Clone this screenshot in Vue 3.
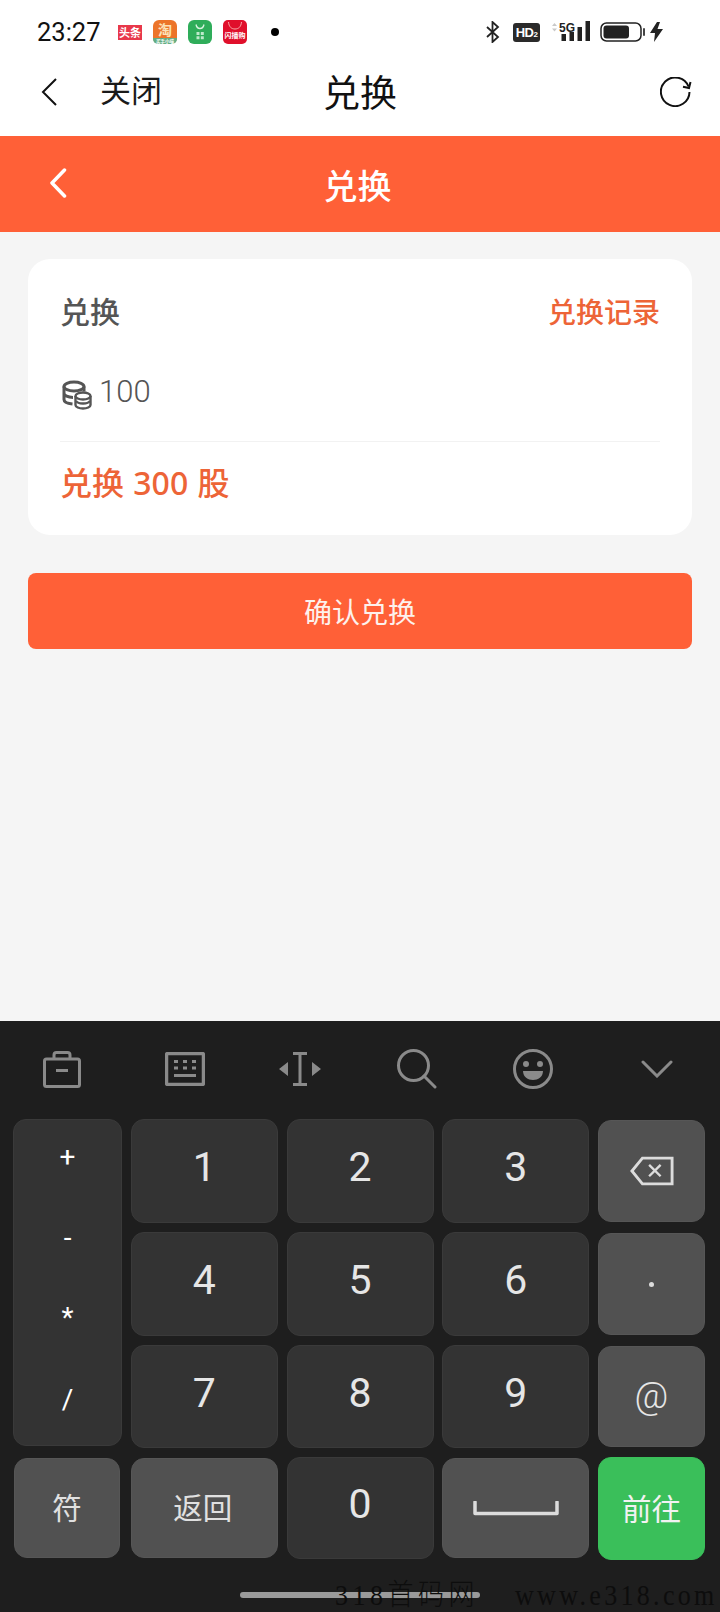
<template>
  <div class="page">
    <!-- status bar -->
    <div class="status">
      <span class="time">23:27</span>
      <div class="apps">
        <svg width="24" height="24" viewBox="0 0 24 24">
          <rect x="0" y="5" width="24" height="15" fill="#e8384a" />
          <text x="12" y="16.5" class="app-text" font-size="11" fill="#fff" text-anchor="middle">头条</text>
        </svg>
        <svg width="24" height="24" viewBox="0 0 24 24">
          <rect width="24" height="24" rx="6" fill="#ec7429" />
          <path d="M0 18h24v1a5 5 0 0 1-5 5H5a5 5 0 0 1-5-5z" fill="#62ad83" />
          <text x="12" y="15" class="app-text" font-size="14" fill="#fbe2b8" text-anchor="middle">淘</text>
          <text x="12" y="22.800" class="app-text" font-size="4.500" fill="#fff" text-anchor="middle">买手小喵</text>
        </svg>
        <svg width="24" height="24" viewBox="0 0 24 24">
          <rect width="24" height="24" rx="6" fill="#2fad5a" />
          <path d="M8 4.500c.6 3 2 4 4 4s3.400-1 4-4" fill="none" stroke="#d8f2df" stroke-width="1.300" />
          <path d="M8.500 12h3v3h-3zM12.800 12h3v3h-3zM8.500 16.300h3v3h-3zM12.800 16.300h3v3h-3z" fill="#bfe9cb" />
        </svg>
        <svg width="24" height="24" viewBox="0 0 24 24">
          <rect width="24" height="24" rx="5" fill="#e00f2b" />
          <path d="M5.500 2c.5 5 3 7 6.500 7s6-2 6.500-7" fill="none" stroke="#f9a9a9" stroke-width="1" />
          <text x="12" y="18" class="app-text" font-size="7" fill="#fff" text-anchor="middle">闪播购</text>
        </svg>
      </div>
      <span class="dot"></span>
      <div class="sys">
        <svg class="bt" width="14" height="22" viewBox="0 0 14 22">
          <path d="M1 6l11 10-5.500 5V1L12 6 1 16" fill="none" stroke="#222" stroke-width="1.800" />
        </svg>
        <div class="hd">HD<small>2</small></div>
        <svg class="signal" width="41" height="22" viewBox="0 0 41 22">
          <path d="M2 5l2.500-3L7 5zM2 7.500h5L4.500 10.500z" fill="#c9c9c9" />
          <text x="9" y="10.500" class="g5" font-size="12" fill="#222">5G</text>
          <rect x="11.500" y="13" width="4.500" height="7" fill="#222" />
          <rect x="19.500" y="11" width="4.500" height="9" fill="#222" />
          <rect x="27.500" y="6" width="4.500" height="14" fill="#222" />
          <rect x="35.500" y="0" width="4.500" height="20" fill="#222" />
        </svg>
        <svg class="batt" width="45" height="20" viewBox="0 0 45 20">
          <rect x="1" y="1" width="40" height="18" rx="5.500" fill="none" stroke="#222" stroke-width="1.500" />
          <rect x="3.500" y="3.500" width="25.500" height="13" rx="3" fill="#222" />
          <rect x="43" y="6" width="2" height="8" rx="1" fill="#444" />
        </svg>
        <svg class="bolt" width="13" height="20" viewBox="0 0 13 20">
          <path d="M7 0L0 11h5l-1 9 9-13H7.500L10 0z" fill="#222" />
        </svg>
      </div>
    </div>

    <!-- webview nav -->
    <div class="nav">
      <div class="nav-left">
        <svg class="nav-back" width="16" height="28" viewBox="0 0 16 28">
          <path d="M15 1L2 14l13 13" fill="none" stroke="#111" stroke-width="2" />
        </svg>
        <span class="nav-close">关闭</span>
      </div>
      <span class="nav-title">兑换</span>
      <div class="nav-right">
        <svg width="32" height="30" viewBox="0 0 32 30">
          <path d="M28.500 9.500A14.300 14.300 0 1 0 29.500 15" fill="none" stroke="#111" stroke-width="2" />
          <path d="M30.500 5l-1.500 6-6-1.200" fill="none" stroke="#111" stroke-width="2" />
        </svg>
      </div>
    </div>

    <!-- orange header -->
    <div class="header">
      <div class="header-left">
        <svg width="18" height="30" viewBox="0 0 18 30">
          <path d="M15.500 2L3 15l12.500 13" fill="none" stroke="#fff" stroke-width="3.500" stroke-linecap="round" stroke-linejoin="round" />
        </svg>
      </div>
      <span class="header-title">兑换</span>
      <div></div>
    </div>

    <div class="content">
      <div class="card">
        <div class="card-head">
          <span class="card-title">兑换</span>
          <span class="card-link">兑换记录</span>
        </div>
        <div class="card-input">
          <svg class="coins" width="30" height="30" viewBox="0 0 30 30">
            <ellipse cx="12" cy="6.500" rx="10" ry="4.500" fill="none" stroke="#555" stroke-width="3" />
            <path d="M2 6.500v13c0 2.500 3.500 4 8.500 4.500M2 13c0 2.500 4 4.500 9 4.500M22 6.500v5" fill="none" stroke="#555" stroke-width="3" />
            <path d="M13.500 16v9c0 2 3.500 3.500 7.500 3.500s7.500-1.500 7.500-3.500v-9" fill="#fff" stroke="#555" stroke-width="2.400" />
            <ellipse cx="21" cy="16" rx="7.500" ry="3.500" fill="#fff" stroke="#555" stroke-width="2.400" />
            <path d="M14 21c1 1.700 3.500 2.500 7 2.500s6-.8 7-2.500" fill="none" stroke="#555" stroke-width="2.400" />
          </svg>
          <span class="amount">100</span>
        </div>
        <div class="card-result">兑换 300 股</div>
      </div>
      <button class="confirm">确认兑换</button>
    </div>

    <!-- keyboard -->
    <div class="kb">
      <div class="kb-tools">
        <svg width="38" height="37" viewBox="0 0 38 37">
          <path d="M11 8V4q0-2.500 2.500-2.500h11Q27 1.500 27 4v4" fill="none" stroke="#8a8a8a" stroke-width="3" />
          <rect x="1.500" y="8" width="35" height="27.500" rx="2" fill="none" stroke="#8a8a8a" stroke-width="3" />
          <rect x="13" y="18" width="12" height="3" fill="#8a8a8a" />
        </svg>
        <svg width="40" height="34" viewBox="0 0 40 34">
          <rect x="1.500" y="1.500" width="37" height="31" rx="1.500" fill="none" stroke="#8a8a8a" stroke-width="3.500" />
          <path d="M9 8h4v3H9zM18 8h4v3h-4zM27 8h4v3h-4zM9 14.500h4v3H9zM18 14.500h4v3h-4zM27 14.500h4v3h-4zM9 22h22v3H9z" fill="#8a8a8a" />
        </svg>
        <svg width="42" height="34" viewBox="0 0 42 34">
          <path d="M14 1.500h14M14 32.500h14M21 1.500v31" fill="none" stroke="#8a8a8a" stroke-width="3" />
          <path d="M9 10v14L0 17zM33 10v14l9-7z" fill="#8a8a8a" />
        </svg>
        <svg width="40" height="40" viewBox="0 0 40 40">
          <circle cx="16.500" cy="16.500" r="15" fill="none" stroke="#8a8a8a" stroke-width="3" />
          <path d="M27 27l11 11" fill="none" stroke="#8a8a8a" stroke-width="3" stroke-linecap="round" />
        </svg>
        <svg width="40" height="40" viewBox="0 0 40 40">
          <circle cx="20" cy="20" r="18.500" fill="none" stroke="#8a8a8a" stroke-width="3" />
          <circle cx="13" cy="15" r="3" fill="#8a8a8a" />
          <circle cx="27" cy="15" r="3" fill="#8a8a8a" />
          <path d="M10 22h20c0 6-5 9-10 9s-10-3-10-9z" fill="#8a8a8a" />
        </svg>
        <svg class="tool-down" width="32" height="18" viewBox="0 0 32 18">
          <path d="M2 2l14 14L30 2" fill="none" stroke="#8a8a8a" stroke-width="3" stroke-linecap="round" />
        </svg>
      </div>

      <div class="kb-keys">
        <div class="key ops">
          <span class="op op-plus">+</span>
          <span class="op op-minus">-</span>
          <span class="op op-star">*</span>
          <span class="op op-slash">/</span>
        </div>
        <template v-for="(row, i) in digitRows" :key="i">
          <div v-for="d in row" :key="d" class="key digit">{{ d }}</div>
          <div class="key fn">
            <svg v-if="i === 0" width="44" height="30" viewBox="0 0 46 31">
              <path d="M44 2H13L2 15.500 13 29h31z" fill="none" stroke="#dcdcdc" stroke-width="3" />
              <path d="M20 9l12 12M32 9L20 21" fill="none" stroke="#dcdcdc" stroke-width="2.500" />
            </svg>
            <span v-else-if="i === 1" class="point"></span>
            <span v-else class="at">@</span>
          </div>
        </template>
        <div class="key fn label fu">符</div>
        <div class="key fn label back">返回</div>
        <div class="key digit">0</div>
        <div class="key fn">
          <svg width="86" height="15" viewBox="0 0 86 15">
            <path d="M2 1v11.500h82V1" fill="none" stroke="#dcdcdc" stroke-width="3.500" stroke-linecap="round" stroke-linejoin="round" />
          </svg>
        </div>
        <div class="key go label">前往</div>
      </div>

      <div class="home-bar"></div>
      <div class="watermark"><span class="wm-a">318首码网</span><span class="wm-b">www.e318.com</span></div>
    </div>
  </div>
</template>

<script setup>
const digitRows = [
  ['1', '2', '3'],
  ['4', '5', '6'],
  ['7', '8', '9']
]
</script>

<style>
html, body {
  margin: 0;
  background: #f5f5f5;
}
</style>

<style scoped>
.page {
  width: 720px;
  height: 1612px;
  display: flex;
  flex-direction: column;
  overflow: hidden;
  font-family: Roboto, "Noto Sans CJK SC", sans-serif;
  background: #f5f5f5;
}

.app-text {
  font-family: "Noto Sans CJK SC", sans-serif;
  font-weight: 700;
}

.status {
  height: 64px;
  flex-shrink: 0;
  padding-left: 37px;
  display: flex;
  align-items: center;
  background: #fff;
}
.time {
  font-size: 25.500px;
  color: #111;
  width: 63px;
  white-space: nowrap;
}
.apps {
  margin-left: 18px;
  display: flex;
  gap: 11px;
}
.dot {
  width: 8px;
  height: 8px;
  margin-left: 24px;
  border-radius: 50%;
  background: #000;
}
.sys {
  margin-left: auto;
  padding-right: 57px;
  display: flex;
  align-items: center;
}
.hd {
  width: 27px;
  height: 19px;
  margin-left: 13px;
  border-radius: 3px;
  background: #2a2a2a;
  color: #fff;
  font: 700 13px/19px "Liberation Sans", sans-serif;
  text-align: center;
  letter-spacing: -0.5px;
}
.hd small {
  font-size: 8px;
}
.signal {
  margin-left: 10px;
  margin-top: -1px;
}
.g5 {
  font-family: "Liberation Sans", sans-serif;
  font-weight: 700;
}
.batt {
  margin-left: 9px;
}
.bolt {
  margin-left: 5px;
}

.nav {
  height: 56px;
  padding-bottom: 16px;
  flex-shrink: 0;
  display: grid;
  grid-template-columns: 1fr auto 1fr;
  align-items: center;
  background: #fff;
}
.nav-left {
  display: flex;
  align-items: center;
  padding-left: 41px;
}
.nav-close {
  margin-left: 43px;
  font-size: 31px;
  line-height: 40px;
  color: #1a1a1a;
}
.nav-title {
  font-size: 37px;
  line-height: 48px;
  color: #111;
  margin-top: 6px;
}
.nav-right {
  display: flex;
  justify-content: flex-end;
  padding-right: 28px;
}

.header {
  height: 96px;
  flex-shrink: 0;
  display: grid;
  grid-template-columns: 1fr auto 1fr;
  align-items: center;
  background: #ff6037;
}
.header-left {
  padding-left: 49px;
  display: flex;
  margin-top: -3px;
}
.header-title {
  font-size: 34px;
  font-weight: 500;
  line-height: 44px;
  color: #fff;
  margin-top: 5px;
  margin-left: -5px;
}

.content {
  flex: 1;
  padding: 27px 28px 0;
}
.card {
  height: 276px;
  box-sizing: border-box;
  padding: 28px 32px 11px;
  border-radius: 22px;
  background: #fff;
}
.card-head {
  height: 54px;
  padding-bottom: 4px;
  box-sizing: border-box;
  display: flex;
  justify-content: space-between;
  align-items: center;
}
.card-title {
  font-size: 30px;
  font-weight: 500;
  color: #555;
  margin-top: -4px;
}
.card-link {
  font-size: 28px;
  font-weight: 500;
  color: #ed6437;
  margin-top: -2px;
}
.card-input {
  height: 100px;
  box-sizing: content-box;
  border-bottom: 1px solid #f2f2f2;
  padding-left: 2px;
  display: flex;
  align-items: center;
  gap: 7px;
}
.coins {
  margin-top: 8px;
}
.amount {
  font-size: 31px;
  font-weight: 300;
  color: #555;
}
.card-result {
  height: 82px;
  line-height: 82px;
  font-family: "Noto Sans", "Noto Sans CJK SC", sans-serif;
  font-size: 32px;
  font-weight: 500;
  word-spacing: 1px;
  color: #ed6437;
}
.confirm {
  display: block;
  width: 100%;
  height: 76px;
  margin-top: 38px;
  padding: 0;
  border: none;
  border-radius: 8px;
  background: #ff6037;
  color: #fdf1ec;
  font: 400 28px "Noto Sans CJK SC", sans-serif;
}

.kb {
  position: relative;
  height: 591px;
  flex-shrink: 0;
  background: #1e1e1e;
}
.kb-tools {
  height: 98px;
  box-sizing: border-box;
  padding-bottom: 2px;
  display: grid;
  grid-template-columns: 124px 122px 108px 125px 108px 133px;
  justify-items: center;
  align-items: center;
}
.tool-down {
  margin-left: 6px;
}
.kb-keys {
  padding-left: 13px;
  display: grid;
  grid-template-columns: 109px 147px 147px 147px 107px;
  grid-template-rows: 104px 104px 103px 102px;
  gap: 9px 8.750px;
}
.key {
  box-sizing: border-box;
  display: flex;
  align-items: center;
  justify-content: center;
  border: 1px solid #3a3a3a;
  border-radius: 13px;
  background: #333;
  color: #e6e6e6;
}
.digit {
  font-size: 41px;
  padding-bottom: 8px;
}
.ops {
  grid-row: 1 / span 3;
  margin-bottom: 2px;
  position: relative;
}
.op {
  position: absolute;
  left: 0;
  right: 0;
  text-align: center;
  color: #fff;
  font-size: 28px;
  line-height: 34px;
}
.op-plus { top: 20px; }
.op-minus { top: 101px; }
.op-star { top: 181px; }
.op-slash { top: 263px; }
.fn {
  margin: 1px 0;
  background: #515151;
  border-color: #565656;
}
.point {
  width: 5px;
  height: 5px;
  border-radius: 50%;
  background: #dcdcdc;
}
.at {
  font-size: 37px;
  font-weight: 300;
  margin-top: -2px;
}
.label {
  font-family: "Noto Sans CJK SC", sans-serif;
  font-weight: 400;
  font-size: 29.500px;
  color: #e0e0e0;
  padding-bottom: 4px;
}
.fu {
  margin-right: 2px;
  margin-left: 1px;
}
.back {
  padding-right: 3px;
}
.go {
  background: #3abf5a;
  border-color: #3abf5a;
  color: #f2f2f2;
  margin-bottom: -1px;
}

.home-bar {
  position: absolute;
  left: 240px;
  top: 571px;
  width: 240px;
  height: 6px;
  border-radius: 3px;
  background: #9a9a9a;
}
.watermark {
  position: absolute;
  left: 335px;
  top: 560px;
  white-space: nowrap;
  color: #0d0d0d;
  font-family: "Liberation Serif", "Noto Sans CJK SC", serif;
  font-size: 26px;
  line-height: 26px;
  font-weight: 300;
  transform: scaleY(1.12);
  transform-origin: left top;
}
.wm-a {
  display: inline-block;
  width: 180px;
  letter-spacing: 4.500px;
}
.wm-b {
  letter-spacing: 3.300px;
}
</style>
